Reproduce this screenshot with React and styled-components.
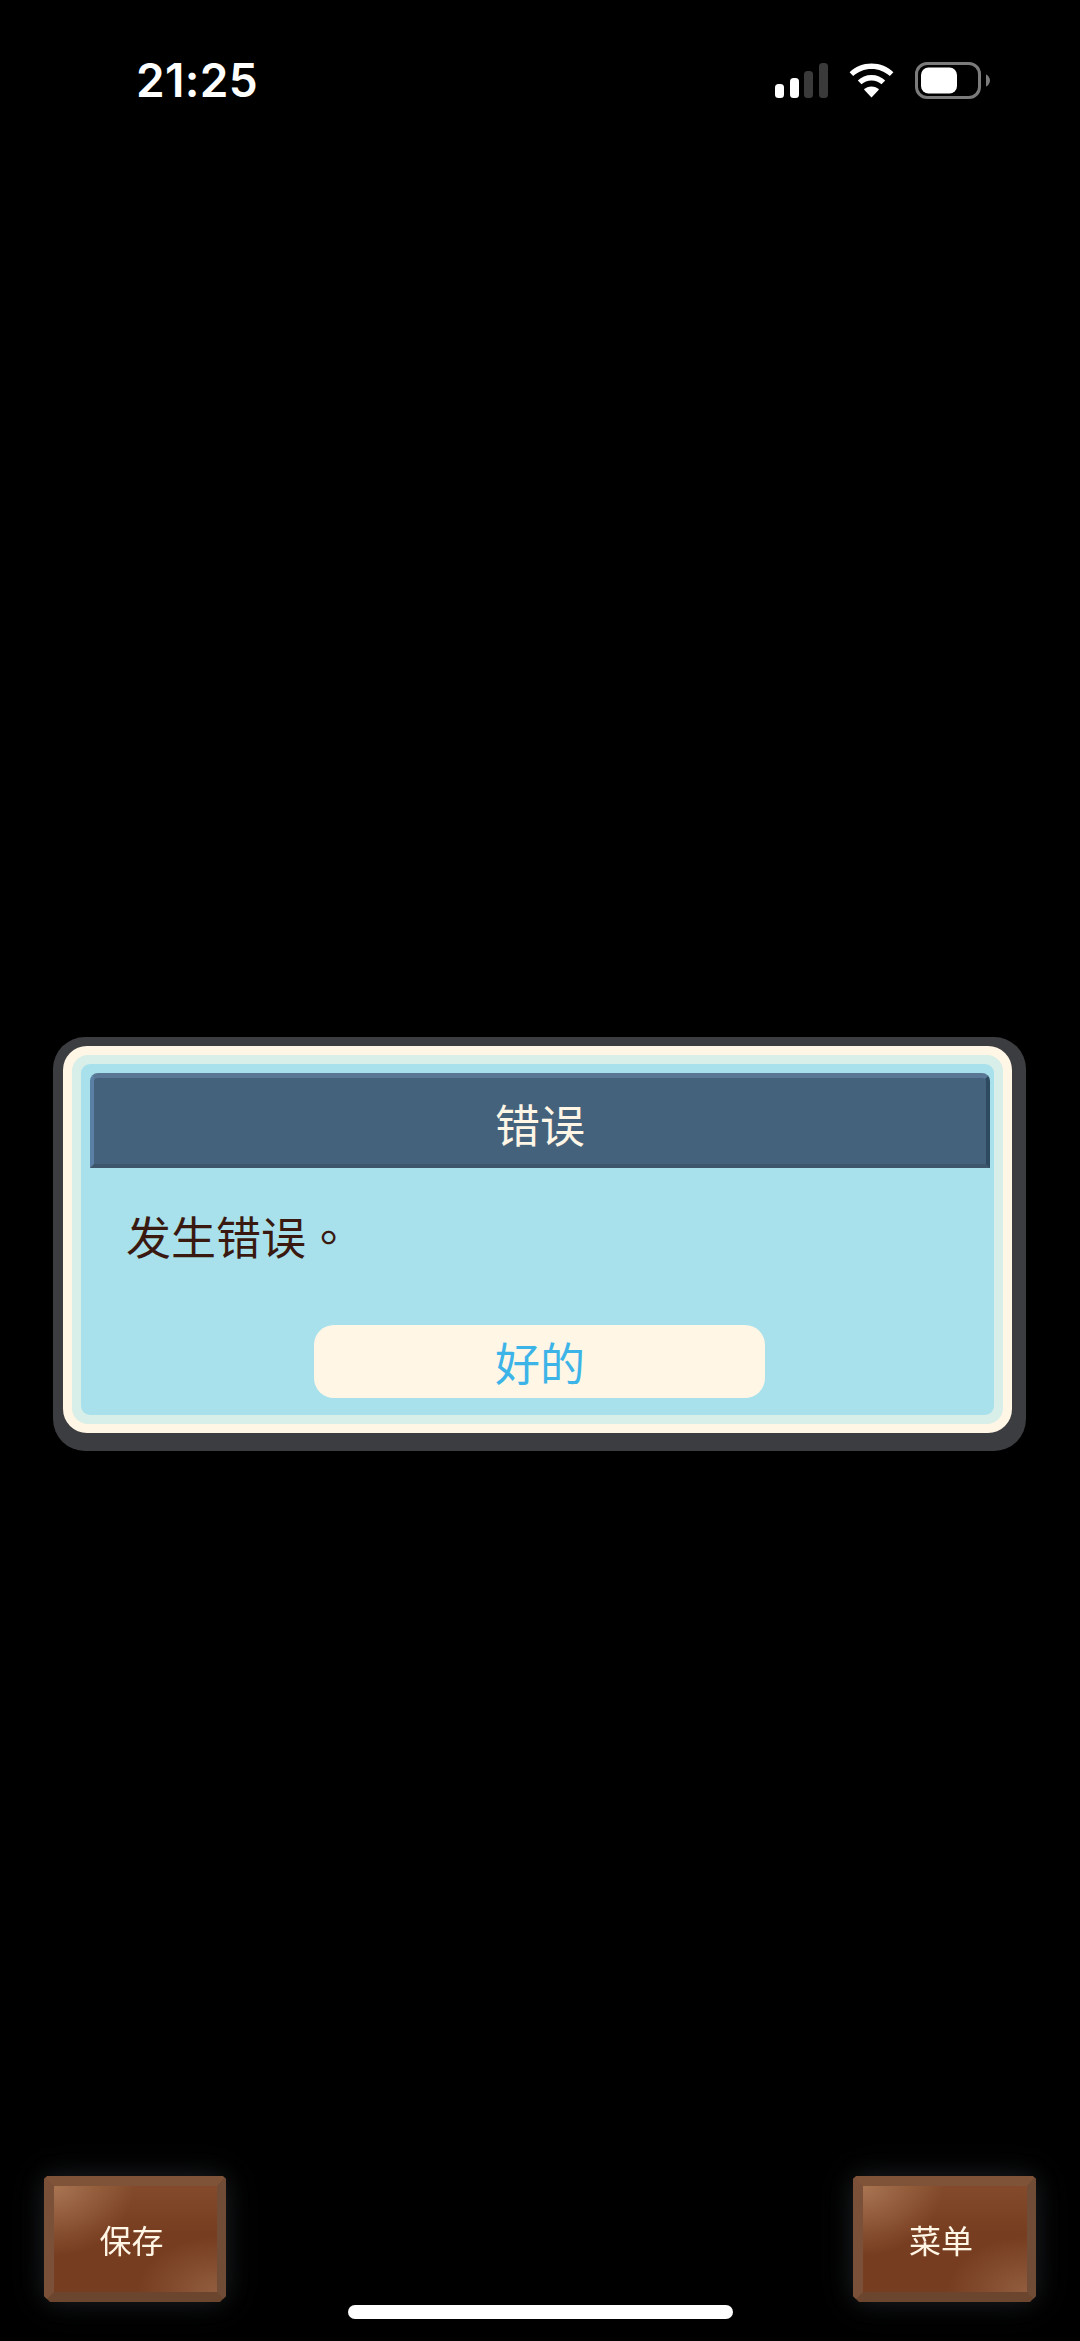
import styled, { createGlobalStyle } from 'styled-components'

const cjk = `"Noto Sans CJK SC", "Noto Sans", sans-serif`

const GlobalStyle = createGlobalStyle`
  html, body {
    margin: 0;
    padding: 0;
    background: #000;
  }
`

export default function App() {
  return (
    <>
      <GlobalStyle />
      <Page>
        <StatusBar>
          <Time>21:25</Time>
          <StatusIcons>
            <SignalIcon />
            <WifiIcon />
            <BatteryIcon />
          </StatusIcons>
        </StatusBar>

        <DialogArea>
          <DialogFrame>
            <DialogCream>
              <DialogPale>
                <DialogPanel>
                  <DialogHeader>错误</DialogHeader>
                  <DialogMessage>
                    发生错误<CenteredStop lang="zh-TW">。</CenteredStop>
                  </DialogMessage>
                  <OkButton>好的</OkButton>
                </DialogPanel>
              </DialogPale>
            </DialogCream>
          </DialogFrame>
        </DialogArea>

        <ActionBar>
          <WoodButton $wide={182}>
            <WoodFrame>
              <WoodFace>保存</WoodFace>
            </WoodFrame>
          </WoodButton>
          <WoodButton $wide={183}>
            <WoodFrame>
              <WoodFace>菜单</WoodFace>
            </WoodFrame>
          </WoodButton>
        </ActionBar>

        <HomeIndicator />
      </Page>
    </>
  )
}

function SignalIcon() {
  return (
    <svg width="53" height="35" viewBox="0 0 53 35">
      <rect x="0" y="21" width="9" height="14" rx="3.5" fill="#fff" />
      <rect x="15" y="15" width="9" height="20" rx="3.5" fill="#fff" />
      <rect x="29" y="8" width="9" height="27" rx="3.5" fill="#3a3a3a" />
      <rect x="44" y="0" width="9" height="35" rx="3.5" fill="#3a3a3a" />
    </svg>
  )
}

function WifiIcon() {
  return (
    <svg width="45" height="35" viewBox="0 0 46 35">
      <path
        d="M23 0C14.200 0 6.400 3.400.6 9l3.700 4C9.100 8.400 15.700 5.700 23 5.700S36.900 8.400 41.700 13l3.700-4C39.600 3.400 31.800 0 23 0Z"
        fill="#fff"
      />
      <path
        d="M23 11.800c-5.500 0-10.400 2.100-14 5.600l3.800 4c2.600-2.500 6.200-4 10.200-4s7.600 1.500 10.200 4l3.800-4c-3.600-3.500-8.500-5.600-14-5.600Z"
        fill="#fff"
      />
      <path d="M23 23.600c-3 0-5.700 1.200-7.700 3.100L23 35l7.700-8.300c-2-1.900-4.700-3.100-7.700-3.100Z" fill="#fff" />
    </svg>
  )
}

function BatteryIcon() {
  return (
    <svg width="75" height="37" viewBox="0 0 75 37">
      <rect x="1.500" y="1.500" width="63" height="34" rx="10.500" fill="none" stroke="#7b7b7b" strokeWidth="3" />
      <rect x="6" y="5.500" width="36" height="26" rx="7.500" fill="#fff" />
      <path d="M71 12.500c2 .8 4 3 4 6s-2 5.200-4 6Z" fill="#7b7b7b" />
    </svg>
  )
}

const Page = styled.div`
  width: 1080px;
  height: 2341px;
  display: flex;
  flex-direction: column;
  overflow: hidden;
  background: #000;
  font-family: ${cjk};
`

const StatusBar = styled.header`
  height: 160px;
  flex: none;
  display: flex;
  justify-content: space-between;
  align-items: flex-start;
  padding: 54px 90px 0 136px;
  box-sizing: border-box;
`

const Time = styled.span`
  font-family: Inter, "Liberation Sans", sans-serif;
  font-size: 46px;
  line-height: 52px;
  font-weight: 600;
  letter-spacing: 0.3px;
  color: #fff;
`

const StatusIcons = styled.div`
  display: flex;
  align-items: center;
  gap: 21px;
  padding-top: 8px;
`

const DialogArea = styled.main`
  flex: 1;
  display: flex;
  align-items: flex-start;
  padding: 877px 54px 0 53px;
`

const DialogFrame = styled.section`
  width: 100%;
  height: 414px;
  box-sizing: border-box;
  padding: 9px 14px 18px 10px;
  border-radius: 32px;
  background: #3c3d40;
`

const DialogCream = styled.div`
  height: 100%;
  box-sizing: border-box;
  padding: 9px;
  border-radius: 24px;
  background: #fff6e6;
`

const DialogPale = styled.div`
  height: 100%;
  box-sizing: border-box;
  padding: 9px;
  border-radius: 16px;
  background: #d8eee8;
`

const DialogPanel = styled.div`
  height: 100%;
  box-sizing: border-box;
  display: flex;
  flex-direction: column;
  align-items: center;
  padding: 9px 4px 0 9px;
  border-radius: 9px;
  background: #a8e1eb;
`

const DialogHeader = styled.h2`
  width: 100%;
  height: 95px;
  flex: none;
  box-sizing: border-box;
  margin: 0;
  padding-top: 6px;
  display: flex;
  align-items: center;
  justify-content: center;
  border-style: solid;
  border-width: 5px 4px 4px;
  border-color: #587896 #2e4a60 #3e566c #5b80a6;
  border-top-left-radius: 8px;
  border-top-right-radius: 8px;
  background: #45627c;
  color: #fff6e6;
  font-size: 45px;
  line-height: 60px;
  font-weight: 400;
`

const DialogMessage = styled.p`
  align-self: flex-start;
  margin: 38px 0 0 36px;
  color: #3a1a10;
  font-size: 45px;
  line-height: 60px;
`

const CenteredStop = styled.span`
  font-family: "Noto Sans CJK TC", sans-serif;
`

const OkButton = styled.button`
  width: 451px;
  height: 73px;
  flex: none;
  margin: 59px 0 0 -2px;
  padding: 0 0 0 2px;
  border: 0;
  border-radius: 20px;
  background: #fff6e6;
  color: #3db4e8;
  font-family: ${cjk};
  font-size: 45px;
  line-height: 60px;
`

const ActionBar = styled.nav`
  flex: none;
  display: flex;
  justify-content: space-between;
  padding: 0 44px;
`

const WoodButton = styled.button`
  width: ${(props) => props.$wide}px;
  height: 126px;
  padding: 0;
  border: 0;
  background: none;
  filter: drop-shadow(0 0 12px rgba(190, 210, 230, 0.1)) drop-shadow(0 0 18px rgba(190, 210, 230, 0.07));
`

const WoodFrame = styled.span`
  display: block;
  width: 100%;
  height: 100%;
  box-sizing: border-box;
  border-style: solid;
  border-width: 10px 9px 10px 10px;
  border-color: #7f5338 #704c36 #6b452d #7a5038;
  clip-path: polygon(
    3px 0,
    calc(100% - 3px) 0,
    100% 3px,
    100% calc(100% - 6px),
    calc(100% - 6px) 100%,
    6px 100%,
    0 calc(100% - 6px),
    0 3px
  );
`

const WoodFace = styled.span`
  width: 100%;
  height: 100%;
  box-sizing: border-box;
  padding: 0 8px 0 0;
  display: flex;
  align-items: center;
  justify-content: center;
  background:
    radial-gradient(80px 70px at 0 0, rgba(180, 130, 95, 0.75), rgba(180, 130, 95, 0) 100%),
    radial-gradient(80px 55px at 100% 100%, rgba(160, 110, 80, 0.65), rgba(160, 110, 80, 0) 100%),
    linear-gradient(180deg, #834b2b 0, #773d20 45%, #773d20 100%);
  color: #fff6e6;
  font-family: ${cjk};
  font-size: 32px;
  line-height: 44px;
`

const HomeIndicator = styled.div`
  width: 385px;
  height: 14px;
  flex: none;
  margin: 3px auto 22px;
  border-radius: 7px;
  background: #fff;
`
